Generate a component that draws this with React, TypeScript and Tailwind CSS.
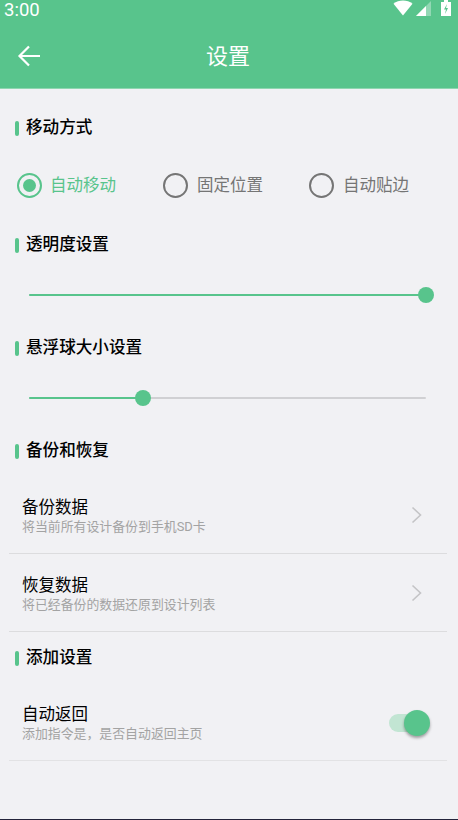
import React from "react";

function Heading({ children, className = "" }: { children: React.ReactNode; className?: string }) {
  return (
    <div className={`flex items-center h-[24px] pl-[15px] ${className}`}>
      <span className="w-[4px] h-[15px] rounded-[2px] bg-[#58c48c] mr-[7px]" />
      <span className="text-[16.6px] leading-[24px] font-medium text-black">{children}</span>
    </div>
  );
}

function Radio({ label, on, className = "" }: { label: string; on?: boolean; className?: string }) {
  return (
    <div className={`flex items-center ${className}`}>
      <span className={`w-[25px] h-[25px] rounded-full border-[2.75px] flex items-center justify-center ${on ? "border-[#58c48c]" : "border-[#757575]"}`}>
        {on && <span className="w-[13px] h-[13px] rounded-full bg-[#58c48c]" />}
      </span>
      <span className={`ml-[9px] mt-[1px] text-[16.5px] leading-[24px] ${on ? "text-[#58c48c] -translate-x-[1px]" : "text-[#757575]"}`}>{label}</span>
    </div>
  );
}

function Slider({ pct, className = "" }: { pct: number; className?: string }) {
  return (
    <div className={`relative ml-[29px] w-[397px] h-[2px] bg-[#d0d0d3] rounded-full ${className}`}>
      <div className="h-full bg-[#58c48c] rounded-full" style={{ width: `${pct}%` }} />
      <span className="absolute top-[-7px] w-[16px] h-[16px] -ml-[8px] rounded-full bg-[#58c48c]" style={{ left: `${pct}%` }} />
    </div>
  );
}

function Row({ title, sub, className = "" }: { title: string; sub: string; className?: string }) {
  return (
    <div className={`ml-[9px] mr-[11px] h-[78px] pt-[1px] border-b border-[#dcdcde] flex items-center justify-between pl-[13px] pr-[24px] ${className}`}>
      <div className="flex flex-col">
        <span className="text-[16.5px] leading-[23px] text-black">{title}</span>
        <span className="text-[12.9px] leading-[16px] text-[#a3a3a3]">{sub}</span>
      </div>
      <svg width="12" height="18" viewBox="0 0 12 18" fill="none" stroke="#c4c4c6" strokeWidth="1.6" className="-mt-[1px]">
        <path d="M1.5 1.5 L9.5 9 L1.5 16.5" />
      </svg>
    </div>
  );
}

export default function App() {
  return (
    <div
      className="w-[458px] h-[820px] overflow-hidden bg-[#f1f1f4] flex flex-col relative"
      style={{ fontFamily: '"Roboto", "Noto Sans CJK SC", sans-serif' }}
    >
      <div className="h-[89px] bg-[#58c48c] border-b border-[#8fd6b0] text-white shrink-0">
        <div className="h-[20px] flex items-start justify-between pl-[4px] pr-[7px]">
          <span className="text-[18.5px] leading-[20px]">3:00</span>
          <div className="flex items-start">
            <svg width="20" height="16" viewBox="0 0 21 16"><path d="M0.5 3.5 C6 -1 15 -1 20.5 3.5 L10.5 16 Z" fill="#fff" /></svg>
            <svg width="15" height="15" viewBox="0 0 15 15" className="ml-[3px] mt-[1px]">
              <path d="M0 15 L15 0 V15 Z" fill="#fff" fillOpacity="0.35" />
              <path d="M0 15 L10 5 V15 Z" fill="#fff" />
            </svg>
            <svg width="10" height="16" viewBox="0 0 10 16" className="ml-[10px]">
              <path d="M3 0 H7 V2 H10 V16 H0 V2 H3 Z" fill="#fff" />
              <path d="M6 4 L3 9.5 H5 L4 14 L7 8 H5 Z" fill="#58c48c" />
            </svg>
          </div>
        </div>
        <div className="relative h-[68px] flex items-center justify-center">
          <svg width="24" height="24" viewBox="0 0 24 24" fill="none" stroke="#fff" strokeWidth="2.2" className="absolute left-[16.5px] top-[24px]">
            <path d="M23 12 H3 M12 2.5 L2.5 12 L12 21.5" />
          </svg>
          <span className="text-[22px] leading-[30px] -translate-x-[1px] mt-[5px]">设置</span>
        </div>
      </div>

      <Heading className="mt-[27px]">移动方式</Heading>
      <div className="flex mt-[33px] pl-[17px]">
        <Radio label="自动移动" on className="w-[146px]" />
        <Radio label="固定位置" className="w-[146px]" />
        <Radio label="自动贴边" />
      </div>

      <Heading className="mt-[35px]">透明度设置</Heading>
      <Slider pct={100} className="mt-[37px]" />

      <Heading className="mt-[40px]">悬浮球大小设置</Heading>
      <Slider pct={28.7} className="mt-[37px]" />

      <Heading className="mt-[40px]">备份和恢复</Heading>
      <Row title="备份数据" sub="将当前所有设计备份到手机SD卡" className="mt-[13px]" />
      <Row title="恢复数据" sub="将已经备份的数据还原到设计列表" />

      <Heading className="mt-[14px]">添加设置</Heading>
      <div className="ml-[9px] mr-[11px] mt-[19px] h-[72px] pb-[5px] border-b border-[#e2e2e4] flex items-center justify-between pl-[13px] pr-[17px]">
        <div className="flex flex-col">
          <span className="text-[16.5px] leading-[23px] text-black">自动返回</span>
          <span className="text-[12.9px] leading-[16px] text-[#a3a3a3]">添加指令是，是否自动返回主页</span>
        </div>
        <div className="relative w-[41px] h-[18px] mt-[2px]">
          <div className="w-[32px] h-[18px] rounded-full bg-[#c2e5d3]" />
          <span className="absolute left-[15px] top-[-4px] w-[26px] h-[26px] rounded-full bg-[#58c48c] shadow-[0_2px_3px_rgba(0,0,0,0.35)]" />
        </div>
      </div>

      <div className="absolute left-0 right-0 bottom-0 h-[1px] bg-[#23233a]" />
    </div>
  );
}
